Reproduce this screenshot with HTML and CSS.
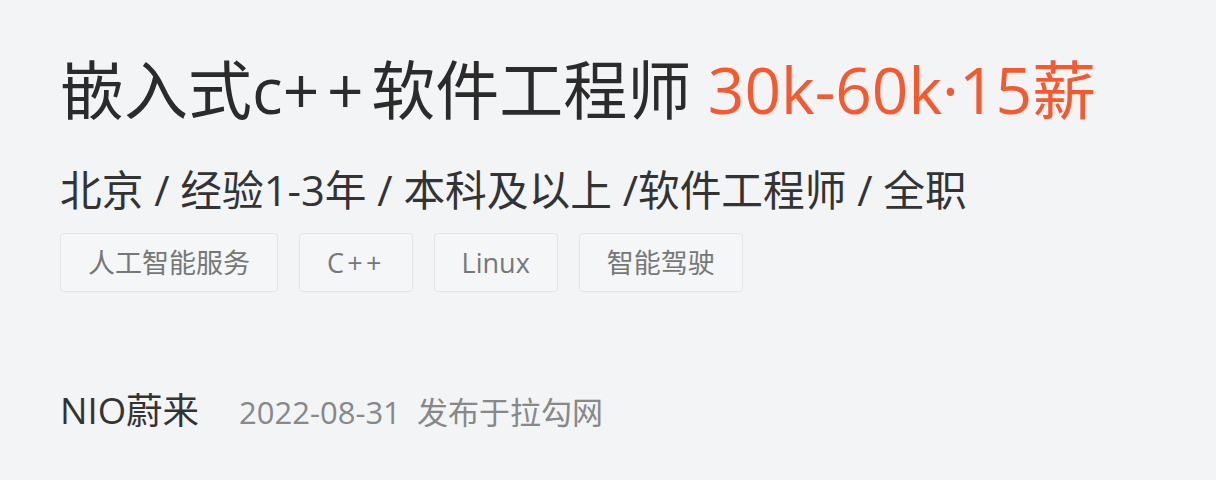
FILE: index.html
```html
<!DOCTYPE html>
<html>
<head>
  <title>嵌入式c++软件工程师</title>
  <link rel="stylesheet" href="styles.css">
</head>
<body>
  <div class="job-card">
    <h1 class="job-title">嵌入式c<span class="plus">++</span>软件工程师 <span class="salary">30k-60k·15薪</span></h1>
    <p class="job-meta">北京 / 经验1-3年 / 本科及以上 /软件工程师 / 全职</p>
    <ul class="tags">
      <li class="tag">人工智能服务</li>
      <li class="tag"><span class="plus">C++</span></li>
      <li class="tag">Linux</li>
      <li class="tag">智能驾驶</li>
    </ul>
    <div class="publisher">
      <span class="company">NIO蔚来</span>
      <span class="publish-time">2022-08-31&nbsp; 发布于拉勾网</span>
    </div>
  </div>
</body>
</html>
```

FILE: styles.css
```css
html, body {
  margin: 0;
  height: 100%;
}
body {
  font-family: 'Open Sans', 'Noto Sans CJK SC', sans-serif;
  background-color: #f2f4f6;
  color: #333;
}
.job-card {
  padding: 50px 60px 0;
}
.job-title {
  margin: 0;
  font-size: 64px;
  font-weight: normal;
  line-height: 80px;
  color: #2b2b2b;
  white-space: nowrap;
}
.plus {
  letter-spacing: 0.12em;
}
.salary {
  color: #f6592e;
}
.job-meta {
  margin: 32px 0 0;
  font-size: 41.7px;
  line-height: 56px;
  color: #333;
  white-space: nowrap;
}
.tags {
  display: flex;
  gap: 21px;
  list-style: none;
  margin: 15px 0 0;
  padding: 0;
}
.tag {
  height: 57px;
  line-height: 57px;
  padding: 0 27px;
  border: 1px solid #e3e5e8;
  border-radius: 4px;
  background-color: #f4f6f8;
  color: #777;
  font-size: 27px;
}
.publisher {
  margin-top: 93px;
  display: flex;
  align-items: baseline;
  gap: 40px;
  line-height: 50px;
}
.company {
  font-size: 36.5px;
  color: #333;
}
.publish-time {
  font-size: 31px;
  color: #888;
}
```
